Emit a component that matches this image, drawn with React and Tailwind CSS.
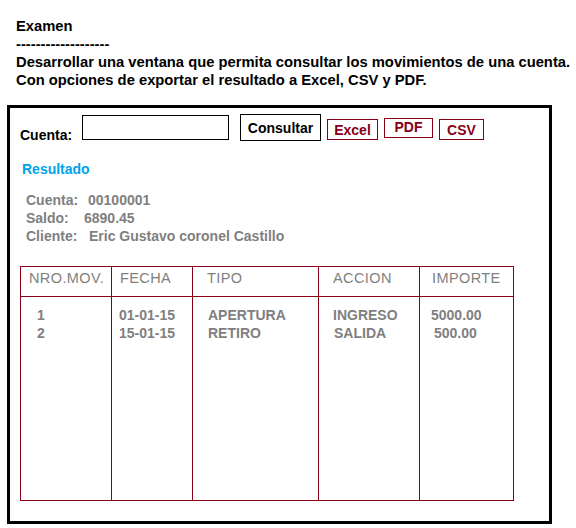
import React from "react";

// Colores tomados del dibujo original (paleta de Paint)
const RED = "border-[#880015] text-[#880015]";

const columnas = [
  { titulo: "NRO.MOV.", w: "w-[91px]", th: "pl-[8px]", filas: [["1", "pl-[16px]"], ["2", "pl-[16px]"]] },
  { titulo: "FECHA", w: "w-[81px]", th: "pl-[8px]", filas: [["01-01-15", "pl-[7px]"], ["15-01-15", "pl-[7px]"]] },
  { titulo: "TIPO", w: "w-[126px]", th: "pl-[14px]", filas: [["APERTURA", "pl-[15px]"], ["RETIRO", "pl-[15px]"]] },
  { titulo: "ACCION", w: "w-[101px]", th: "pl-[14px]", filas: [["INGRESO", "pl-[14px]"], ["SALIDA", "pl-[15px]"]] },
  { titulo: "IMPORTE", w: "flex-1", th: "pl-[12px]", filas: [["5000.00", "pl-[11px]"], ["500.00", "pl-[14px]"]] },
];

const App = () => {
  return (
    <div className="w-[576px] h-[528px] bg-white font-['Liberation_Sans',Arial,sans-serif] overflow-hidden">
      {/* Enunciado */}
      <div className="pt-[17px] pl-[16px] text-[14.75px] font-bold leading-[18px] text-black whitespace-nowrap">
        <p>Examen</p>
        <p>-------------------</p>
        <p>Desarrollar una ventana que permita consultar los movimientos de una cuenta.</p>
        <p>Con opciones de exportar el resultado a Excel, CSV y PDF.</p>
      </div>

      {/* Ventana */}
      <div className="ml-[7px] mt-[16px] w-[545px] h-[419px] border-[3px] border-black flex flex-col">
        <div className="flex items-start mt-[6px] ml-[10px] h-[27px]">
          <span className="w-[62px] mt-[13px] text-[14px] font-bold leading-[16px] text-black">
            Cuenta:
          </span>
          <div className="w-[147px] h-[25px] mt-[1px] border border-black"></div>
          <div className="ml-[11px] w-[81px] h-[27px] border border-black flex items-center justify-center text-[14px] font-bold leading-[16px] text-black">
            Consultar
          </div>
          <div className={`ml-[6px] w-[51px] h-[21px] mt-[5px] border ${RED} flex items-center justify-center text-[14px] font-bold leading-[16px]`}>
            Excel
          </div>
          <div className={`ml-[6px] w-[49px] h-[20px] mt-[4px] pb-[2px] border ${RED} flex items-center justify-center text-[14px] font-bold leading-[16px]`}>
            PDF
          </div>
          <div className={`ml-[6px] w-[45px] h-[21px] mt-[5px] border ${RED} flex items-center justify-center text-[14px] font-bold leading-[16px]`}>
            CSV
          </div>
        </div>

        <p className="mt-[20px] ml-[12px] text-[14px] font-bold leading-[16px] text-[#00a2e8]">
          Resultado
        </p>

        <div className="mt-[14px] ml-[16px] text-[14px] font-bold leading-[18px] text-[#7f7f7f]">
          <p>
            <span className="inline-block w-[62px]">Cuenta:</span>00100001
          </p>
          <p>
            <span className="inline-block w-[58px]">Saldo:</span>6890.45
          </p>
          <p>
            <span className="inline-block w-[63px]">Cliente:</span>Eric Gustavo coronel Castillo
          </p>
        </div>

        {/* Tabla de movimientos */}
        <div className="mt-[21px] ml-[10px] w-[494px] h-[235px] border border-[#880015] flex">
          {columnas.map((col, i) => (
            <div
              key={col.titulo}
              className={`${col.w} flex flex-col ${i < columnas.length - 1 ? "border-r border-[#880015]" : ""}`}
            >
              <div className={`h-[30px] border-b border-[#880015] pt-[2px] ${col.th} text-[14.5px] leading-[18px] tracking-[0.4px] text-[#7f7f7f] whitespace-nowrap`}>
                {col.titulo}
              </div>
              <div className="pt-[9px] text-[14px] font-bold leading-[18px] text-[#7f7f7f]">
                {col.filas.map(([valor, pad]) => (
                  <p key={valor} className={pad}>
                    {valor}
                  </p>
                ))}
              </div>
            </div>
          ))}
        </div>
      </div>
    </div>
  );
};

export default App;
